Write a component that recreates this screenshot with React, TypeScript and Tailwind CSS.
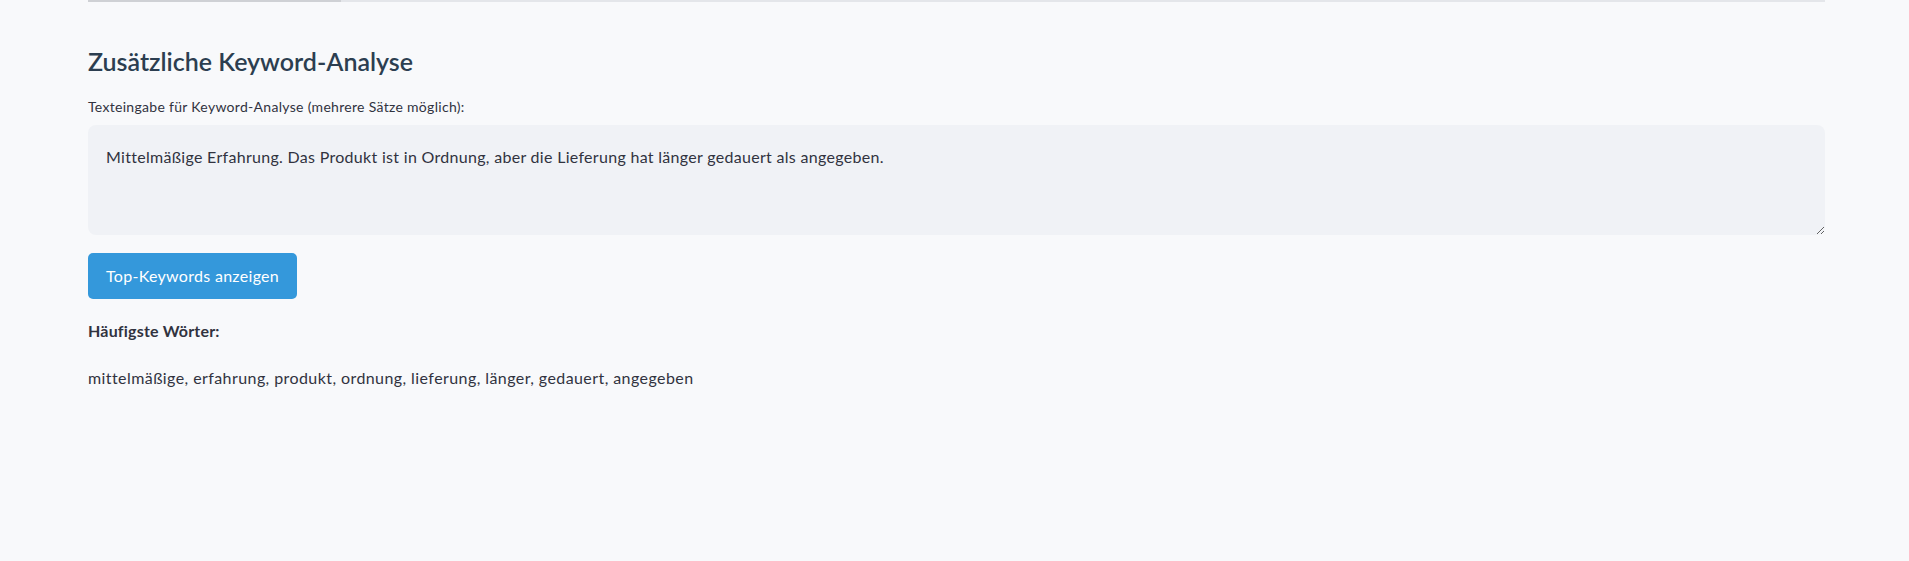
export default function App() {
  const keywords = [
    'mittelmäßige',
    'erfahrung',
    'produkt',
    'ordnung',
    'lieferung',
    'länger',
    'gedauert',
    'angegeben',
  ];

  return (
    <div className="min-h-screen bg-[#f8f9fb] font-['Lato',sans-serif] text-[#31333f]">
      <div className="ml-[88px] w-[1737px]">
        {/* divider left over from the section above */}
        <div className="flex h-[2px]">
          <div className="w-[253px] bg-[#cfd1d5]" />
          <div className="flex-1 bg-[#e4e6ea]" />
        </div>

        <h3 className="mt-[44px] text-[25px] font-semibold leading-[1.2] text-[#2c3e50]">
          Zusätzliche Keyword-Analyse
        </h3>

        <label className="mt-[20px] block text-[14px] leading-[1.5] tracking-[0.3px]">
          Texteingabe für Keyword-Analyse (mehrere Sätze möglich):
        </label>

        <textarea
          className="mt-[8px] block h-[110px] w-full rounded-[8px] border-0 bg-[#f0f2f6] px-[18px] pt-[19px] pb-4 text-[16px] leading-[1.6] tracking-[0.3px] text-[#31333f] outline-none"
          defaultValue="Mittelmäßige Erfahrung. Das Produkt ist in Ordnung, aber die Lieferung hat länger gedauert als angegeben."
        />

        <button className="mt-[18px] flex h-[46px] items-center rounded-[5px] bg-[#3498db] px-[18px] text-[16px] tracking-[0.3px] text-white">
          Top-Keywords anzeigen
        </button>

        <p className="mt-[19px] text-[16px] font-bold leading-[1.6] tracking-[0.2px]">Häufigste Wörter:</p>

        <p className="mt-[21px] text-[16px] leading-[1.6] tracking-[0.42px]">{keywords.join(', ')}</p>
      </div>
    </div>
  );
}
